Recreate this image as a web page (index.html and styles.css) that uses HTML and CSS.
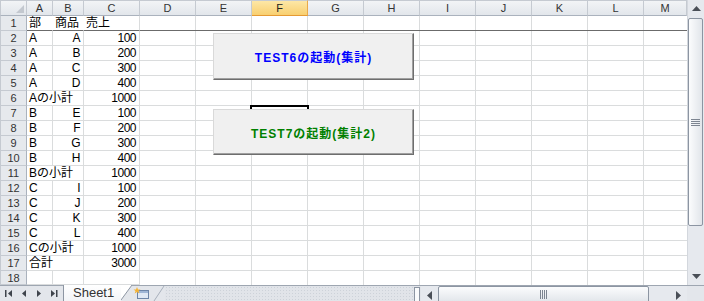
FILE: index.html
```html
<!DOCTYPE html>
<html lang="ja">
<head>
  <meta charset="UTF-8">
  <title>Sheet1</title>
  <link rel="stylesheet" href="styles.css">
</head>
<body>
<div class="excel">
  <div class="main">
    <div class="sheet">
      <div class="hd corner"><svg width="8" height="8"><polygon points="8,0 8,8 0,8" fill="#c3c8cf"/></svg></div>
      <div class="hd">A</div><div class="hd">B</div><div class="hd">C</div><div class="hd">D</div><div class="hd">E</div>
      <div class="hd sel">F</div><div class="hd">G</div><div class="hd">H</div><div class="hd">I</div><div class="hd">J</div>
      <div class="hd">K</div><div class="hd">L</div><div class="hd">M</div>

      <div class="fill top-fill"></div>
      <div class="fill body-fill"></div>

      <div class="rh">1</div><div class="c fr nv">部</div><div class="c fr nv">商品</div><div class="c fr">売上</div>
      <div class="rh">2</div><div class="c">A</div><div class="c r">A</div><div class="c r">100</div>
      <div class="rh">3</div><div class="c">A</div><div class="c r">B</div><div class="c r">200</div>
      <div class="rh">4</div><div class="c">A</div><div class="c r">C</div><div class="c r">300</div>
      <div class="rh">5</div><div class="c">A</div><div class="c r">D</div><div class="c r">400</div>
      <div class="rh">6</div><div class="c w2">Aの小計</div><div class="c r">1000</div>
      <div class="rh">7</div><div class="c">B</div><div class="c r">E</div><div class="c r">100</div>
      <div class="rh">8</div><div class="c">B</div><div class="c r">F</div><div class="c r">200</div>
      <div class="rh">9</div><div class="c">B</div><div class="c r">G</div><div class="c r">300</div>
      <div class="rh">10</div><div class="c">B</div><div class="c r">H</div><div class="c r">400</div>
      <div class="rh">11</div><div class="c w2">Bの小計</div><div class="c r">1000</div>
      <div class="rh">12</div><div class="c">C</div><div class="c r">I</div><div class="c r">100</div>
      <div class="rh">13</div><div class="c">C</div><div class="c r">J</div><div class="c r">200</div>
      <div class="rh">14</div><div class="c">C</div><div class="c r">K</div><div class="c r">300</div>
      <div class="rh">15</div><div class="c">C</div><div class="c r">L</div><div class="c r">400</div>
      <div class="rh">16</div><div class="c w2">Cの小計</div><div class="c r">1000</div>
      <div class="rh">17</div><div class="c w2">合計</div><div class="c r">3000</div>
      <div class="rh">18</div><div class="c"></div><div class="c"></div><div class="c"></div>

      <!-- active cell F7, mostly hidden under the second button -->
      <div class="selbox"></div>
      <div class="btn b1">TEST6の起動(集計)</div>
      <div class="btn b2">TEST7の起動(集計2)</div>
    </div>

    <div class="vscroll">
      <div class="sb-btn"><svg width="9" height="5"><polygon points="0,5 9,5 4.5,0" fill="#4a4f57"/></svg></div>
      <div class="vthumb">
        <svg width="9" height="7"><g fill="#7d8591"><rect y="0" width="9" height="1"/><rect y="2" width="9" height="1"/><rect y="4" width="9" height="1"/><rect y="6" width="9" height="1"/></g></svg>
      </div>
      <div class="track"></div>
      <div class="sb-btn"><svg width="9" height="5"><polygon points="0,0 9,0 4.5,5" fill="#4a4f57"/></svg></div>
    </div>
  </div>

  <div class="bottom">
    <div class="tabs">
      <div class="nav">
        <svg width="63" height="15">
          <g fill="#3f444c">
            <rect x="5" y="4" width="1.5" height="7"/>
            <polygon points="12,4 12,11 8,7.5"/>
            <polygon points="26,4 26,11 22,7.5"/>
            <polygon points="37,4 37,11 41,7.5"/>
            <polygon points="51,4 51,11 55,7.5"/>
            <rect x="56" y="4" width="1.5" height="7"/>
          </g>
        </svg>
      </div>
      <div class="tab">Sheet1</div>
      <svg class="slant" width="11" height="15"><polygon points="0,0 11,0 0,15" fill="#ffffff"/><polyline points="11,0 0,15" fill="none" stroke="#8d96a3"/></svg>
      <div class="newtab">
        <svg width="33" height="15">
          <rect x="5.5" y="4.5" width="11" height="8" fill="#dfe8f4" stroke="#6d85a8"/>
          <rect x="6" y="5" width="10" height="2" fill="#9fb6d6"/>
          <polygon points="5,1 6,3.5 8.5,3.5 6.5,5 7.3,7.5 5,6 2.7,7.5 3.5,5 1.5,3.5 4,3.5" fill="#f5b335"/>
          <polyline points="32,0 22,15" fill="none" stroke="#a7afbb"/>
        </svg>
      </div>
      <div class="dots"></div>
    </div>
    <div class="split"><div class="split-in"></div></div>
    <div class="hscroll">
      <div class="sb-btn h"><svg width="5" height="9"><polygon points="5,0 5,9 0,4.5" fill="#4a4f57"/></svg></div>
      <div class="hthumb">
        <svg width="7" height="9"><g fill="#7d8591"><rect x="0" width="1" height="9"/><rect x="2" width="1" height="9"/><rect x="4" width="1" height="9"/><rect x="6" width="1" height="9"/></g></svg>
      </div>
      <div class="track"></div>
      <div class="sb-btn h"><svg width="5" height="9"><polygon points="0,0 0,9 5,4.5" fill="#4a4f57"/></svg></div>
    </div>
    <div class="hcorner"></div>
  </div>
</div>
</body>
</html>
```

FILE: styles.css
```css
* {
  box-sizing: border-box;
}
body {
  margin: 0;
  font-family: "Liberation Sans", "Noto Sans CJK JP", sans-serif;
  font-size: 12px;
  color: #000;
  background: #fff;
}
.excel {
  width: 704px;
  height: 301px;
  display: flex;
  flex-direction: column;
  overflow: hidden;
}
.main {
  display: flex;
  height: 285px;
}

/* worksheet grid */
.sheet {
  position: relative;
  width: 687px;
  display: grid;
  grid-template-columns: 27px 26px 31px 56px repeat(9, 56px) 43px;
  grid-template-rows: 16px repeat(17, 15px) 14px;
  overflow: hidden;
}
.hd {
  background: linear-gradient(#f2f4f6, #e2e6eb);
  border-top: 1px solid #c5cad1;
  border-right: 1px solid #c5cad1;
  border-bottom: 1px solid #aab2bd;
  color: #333;
  font-size: 11px;
  line-height: 14px;
  text-align: center;
}
.hd.corner {
  border-left: 1px solid #c5cad1;
  display: flex;
  align-items: flex-end;
  justify-content: flex-end;
  padding: 0 2px 2px 0;
}
.hd.sel {
  background: linear-gradient(#fde7a6, #f8cf70);
  border-right-color: #e9a94a;
  border-bottom-color: #e59a33;
  color: #222;
}
.rh {
  background: #e6e9ed;
  border-left: 1px solid #c5cad1;
  border-right: 1px solid #aab2bd;
  border-bottom: 1px solid #c5cad1;
  color: #333;
  font-size: 11px;
  line-height: 14px;
  text-align: center;
}
.c {
  border-right: 1px solid #dadcdd;
  border-bottom: 1px solid #dadcdd;
  line-height: 14px;
  padding: 0 2px;
  white-space: nowrap;
  overflow: hidden;
}
.c.r {
  text-align: right;
  padding-right: 3px;
  letter-spacing: -0.5px;
}
.c.w2 {
  grid-column: span 2;
}
.c.nv {
  border-right-color: transparent;
}
.c.fr {
  border-bottom-color: #6b6b6b;
}
.fill {
  background-image: repeating-linear-gradient(to right, transparent 0 55px, #dadcdd 55px 56px);
}
.top-fill {
  grid-column: 5 / 15;
  grid-row: 2;
  border-bottom: 1px solid #6b6b6b;
}
.body-fill {
  grid-column: 5 / 15;
  grid-row: 3 / 20;
  background-image:
    repeating-linear-gradient(to right, transparent 0 55px, #dadcdd 55px 56px),
    repeating-linear-gradient(to bottom, transparent 0 14px, #dadcdd 14px 15px);
}

/* floating objects on the sheet */
.selbox {
  position: absolute;
  left: 250px;
  top: 105px;
  width: 59px;
  height: 17px;
  border: 2px solid #000;
}
.btn {
  position: absolute;
  left: 213px;
  width: 201px;
  background: #f0f0f0;
  border: 1px solid;
  border-color: #d9d9d9 #6e6e6e #6e6e6e #d9d9d9;
  box-shadow: inset -1px -1px 0 #a0a0a0;
  font-weight: bold;
  font-size: 12px;
  letter-spacing: 1px;
  display: flex;
  align-items: center;
  justify-content: center;
}
.b1 {
  top: 33px;
  height: 47px;
  color: #0000ff;
}
.b2 {
  top: 109px;
  height: 46px;
  color: #008000;
}

/* scroll bars */
.vscroll {
  width: 17px;
  display: flex;
  flex-direction: column;
  background: #e6e9ee;
  border-left: 1px solid #d3d7dd;
}
.sb-btn {
  height: 17px;
  flex: none;
  display: flex;
  align-items: center;
  justify-content: center;
}
.sb-btn.h {
  height: auto;
  width: 17px;
}
.vthumb {
  margin: 1px 1px 0 0;
  height: 208px;
  border: 1px solid #8c95a2;
  border-radius: 2px;
  background: linear-gradient(to right, #fbfcfd, #e1e5ea);
  display: flex;
  align-items: center;
  justify-content: center;
}
.track {
  flex: 1;
}

/* bottom strip: sheet tabs + horizontal scroll */
.bottom {
  flex: 1;
  display: flex;
  border-top: 1px solid #9ea6b1;
  background: #e3e6eb;
}
.tabs {
  width: 413px;
  display: flex;
}
.nav {
  width: 63px;
  flex: none;
}
.tab {
  width: 58px;
  flex: none;
  margin-top: -1px;
  background: linear-gradient(#ffffff, #f1f3f6);
  border-left: 1px solid #8d96a3;
  border-bottom: 1px solid #8d96a3;
  color: #333;
  font-size: 13px;
  line-height: 15px;
  padding-left: 9px;
}
.slant {
  flex: none;
  margin-top: -1px;
}
.newtab {
  width: 33px;
  flex: none;
}
.dots {
  flex: 1;
  background-color: #e1e4e9;
  background-image: radial-gradient(#cdd2d9 0.6px, transparent 0.8px);
  background-size: 3px 3px;
}
.split {
  width: 8px;
  padding: 1px 1px;
  background: #e1e4e9;
}
.split-in {
  height: 100%;
  border: 1px solid #8c95a2;
  background: #fafbfc;
}
.hscroll {
  flex: 1;
  display: flex;
  background: #e6e9ee;
}
.hthumb {
  width: 211px;
  margin: 0 0 1px 0;
  border: 1px solid #8c95a2;
  border-radius: 2px;
  background: linear-gradient(#fbfcfd, #e1e5ea);
  display: flex;
  align-items: center;
  justify-content: center;
}
.hcorner {
  width: 17px;
  background: #e3e6eb;
}
```
